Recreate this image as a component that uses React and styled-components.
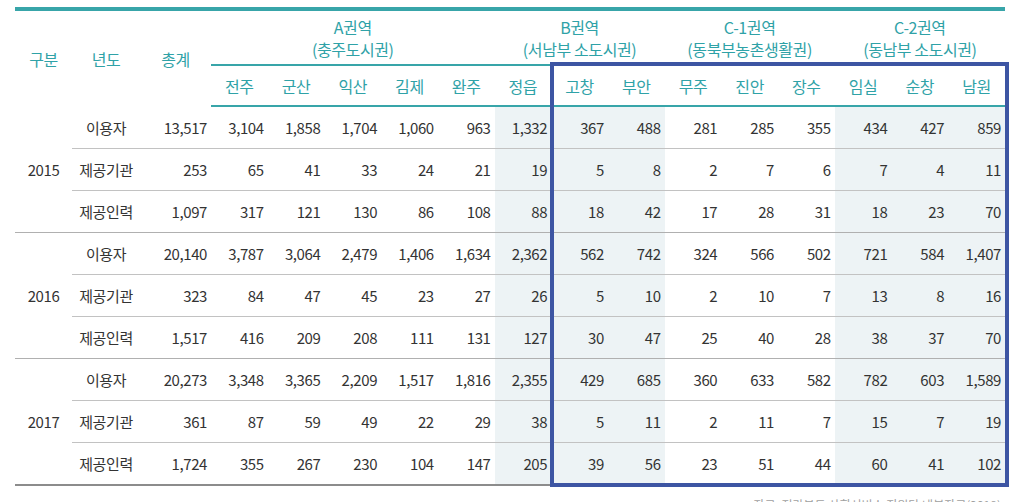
import React from "react";
import styled, { createGlobalStyle } from "styled-components";

const Global = createGlobalStyle`
  html, body { margin: 0; padding: 0; background: #ffffff; }
  body { font-family: "Noto Sans CJK KR", "Noto Sans", sans-serif; overflow: hidden; }
`;

const TEAL = "#38a5a9";
const HEAD_TEXT = "#2fa2a7";
const SHADE = "#edf3f5";

const Page = styled.div`
  position: relative;
  width: 1024px;
  height: 502px;
  padding: 7px 0 0 15px;
  box-sizing: border-box;
`;

const Table = styled.table`
  width: 990px;
  border-collapse: collapse;
  table-layout: fixed;
  border-top: 4px solid ${TEAL};
  border-bottom: 2px solid #8c8c8c;
  font-size: 15px;
  letter-spacing: -0.4px;
  color: #333333;
`;

const HeadCell = styled.th`
  font-weight: 400;
  font-size: 16px;
  color: ${HEAD_TEXT};
  text-align: center;
  vertical-align: middle;
  padding: 0;
  height: ${(p) => p.$h || 42}px;
  line-height: 22px;
  white-space: nowrap;
  border-bottom: ${(p) => (p.$line ? `2px solid ${TEAL}` : "none")};
`;

const GroupLine = styled.span`
  display: block;
  line-height: 22px;
`;

const HeadRow = styled.tr`
  & th { border-bottom: 2px solid ${TEAL}; }
`;

const Row = styled.tr`
  border-bottom: ${(p) => (p.$groupEnd ? "1px solid #b0b0b0" : "none")};
`;

const YearCell = styled.td`
  text-align: center;
  vertical-align: middle;
  padding: 0;
`;

const LabelCell = styled.td`
  text-align: center;
  padding: 0;
  height: 41px;
  white-space: nowrap;
  border-bottom: ${(p) => (p.$last ? "none" : "1px solid #c2c2c2")};
`;

const NumCell = styled.td`
  text-align: right;
  padding: 0 4px 0 0;
  height: 41px;
  white-space: nowrap;
  background: ${(p) => (p.$shade ? SHADE : "transparent")};
  border-bottom: ${(p) => (p.$last ? "none" : "1px solid #c2c2c2")};
`;

const Highlight = styled.div`
  position: absolute;
  left: 550px;
  top: 62px;
  width: 459px;
  height: 425px;
  box-sizing: border-box;
  border: 4px solid #3d55a3;
  pointer-events: none;
`;

const Note = styled.div`
  width: 990px;
  text-align: right;
  font-size: 12px;
  color: #a0a0a0;
  margin-top: 10px;
  padding-right: 4px;
  box-sizing: border-box;
`;

const groups = [
  { name: "A권역", sub: "(충주도시권)", span: 5 },
  { name: "B권역", sub: "(서남부 소도시권)", span: 3 },
  { name: "C-1권역", sub: "(동북부농촌생활권)", span: 3 },
  { name: "C-2권역", sub: "(동남부 소도시권)", span: 3 },
];

const cities = ["전주", "군산", "익산", "김제", "완주", "정읍", "고창", "부안", "무주", "진안", "장수", "임실", "순창", "남원"];
const shaded = new Set([5, 6, 7, 11, 12, 13]);

const data = [
  {
    year: "2015",
    rows: [
      ["이용자", "13,517", "3,104", "1,858", "1,704", "1,060", "963", "1,332", "367", "488", "281", "285", "355", "434", "427", "859"],
      ["제공기관", "253", "65", "41", "33", "24", "21", "19", "5", "8", "2", "7", "6", "7", "4", "11"],
      ["제공인력", "1,097", "317", "121", "130", "86", "108", "88", "18", "42", "17", "28", "31", "18", "23", "70"],
    ],
  },
  {
    year: "2016",
    rows: [
      ["이용자", "20,140", "3,787", "3,064", "2,479", "1,406", "1,634", "2,362", "562", "742", "324", "566", "502", "721", "584", "1,407"],
      ["제공기관", "323", "84", "47", "45", "23", "27", "26", "5", "10", "2", "10", "7", "13", "8", "16"],
      ["제공인력", "1,517", "416", "209", "208", "111", "131", "127", "30", "47", "25", "40", "28", "38", "37", "70"],
    ],
  },
  {
    year: "2017",
    rows: [
      ["이용자", "20,273", "3,348", "3,365", "2,209", "1,517", "1,816", "2,355", "429", "685", "360", "633", "582", "782", "603", "1,589"],
      ["제공기관", "361", "87", "59", "49", "22", "29", "38", "5", "11", "2", "11", "7", "15", "7", "19"],
      ["제공인력", "1,724", "355", "267", "230", "104", "147", "205", "39", "56", "23", "51", "44", "60", "41", "102"],
    ],
  },
];

export default function App() {
  return (
    <>
      <Global />
      <Page>
        <Table>
          <colgroup>
            <col style={{ width: 57 }} />
            <col style={{ width: 68 }} />
            <col style={{ width: 71 }} />
            {cities.map((c) => (
              <col key={c} style={{ width: 56.7 }} />
            ))}
          </colgroup>
          <thead>
            <tr>
              <HeadCell rowSpan={2} $h={53}>구분</HeadCell>
              <HeadCell rowSpan={2} $h={53}>년도</HeadCell>
              <HeadCell rowSpan={2} $h={53}>총계</HeadCell>
              {groups.map((g) => (
                <HeadCell key={g.name} colSpan={g.span} $h={53} $line>
                  <GroupLine>{g.name}</GroupLine>
                  <GroupLine>{g.sub}</GroupLine>
                </HeadCell>
              ))}
            </tr>
            <HeadRow>
              {cities.map((c) => (
                <HeadCell key={c} $h={39}>{c}</HeadCell>
              ))}
            </HeadRow>
          </thead>
          <tbody>
            {data.map((g) =>
              g.rows.map((r, i) => (
                <Row key={g.year + r[0]} $groupEnd={i === 2}>
                  {i === 0 && <YearCell rowSpan={3}>{g.year}</YearCell>}
                  <LabelCell $last={i === 2}>{r[0]}</LabelCell>
                  {r.slice(1).map((v, j) => (
                    <NumCell key={j} $last={i === 2} $shade={shaded.has(j - 1)}>
                      {v}
                    </NumCell>
                  ))}
                </Row>
              ))
            )}
          </tbody>
        </Table>
        <Note>자료: 전라북도 사회서비스 지원단 내부자료(2018)</Note>
        <Highlight />
      </Page>
    </>
  );
}
